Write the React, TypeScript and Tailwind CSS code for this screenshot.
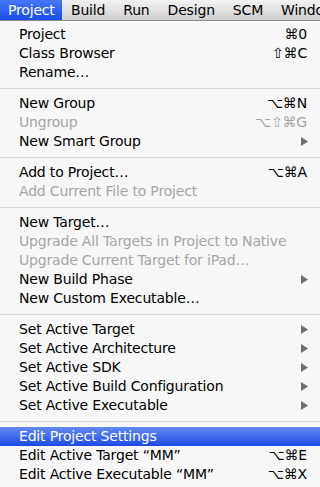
import React from 'react';

type Item =
  | { kind: 'sep' }
  | { kind: 'item'; label: string; shortcut?: string; disabled?: boolean; submenu?: boolean; active?: boolean };

const items: Item[] = [
  { kind: 'item', label: 'Project', shortcut: '⌘0' },
  { kind: 'item', label: 'Class Browser', shortcut: '⇧⌘C' },
  { kind: 'item', label: 'Rename…' },
  { kind: 'sep' },
  { kind: 'item', label: 'New Group', shortcut: '⌥⌘N' },
  { kind: 'item', label: 'Ungroup', shortcut: '⌥⇧⌘G', disabled: true },
  { kind: 'item', label: 'New Smart Group', submenu: true },
  { kind: 'sep' },
  { kind: 'item', label: 'Add to Project…', shortcut: '⌥⌘A' },
  { kind: 'item', label: 'Add Current File to Project', disabled: true },
  { kind: 'sep' },
  { kind: 'item', label: 'New Target…' },
  { kind: 'item', label: 'Upgrade All Targets in Project to Native', disabled: true },
  { kind: 'item', label: 'Upgrade Current Target for iPad…', disabled: true },
  { kind: 'item', label: 'New Build Phase', submenu: true },
  { kind: 'item', label: 'New Custom Executable…' },
  { kind: 'sep' },
  { kind: 'item', label: 'Set Active Target', submenu: true },
  { kind: 'item', label: 'Set Active Architecture', submenu: true },
  { kind: 'item', label: 'Set Active SDK', submenu: true },
  { kind: 'item', label: 'Set Active Build Configuration', submenu: true },
  { kind: 'item', label: 'Set Active Executable', submenu: true },
  { kind: 'sep' },
  { kind: 'item', label: 'Edit Project Settings', active: true },
  { kind: 'item', label: 'Edit Active Target “MM”', shortcut: '⌥⌘E' },
  { kind: 'item', label: 'Edit Active Executable “MM”', shortcut: '⌥⌘X' },
];

const menuBar = ['Project', 'Build', 'Run', 'Design', 'SCM', 'Window'];

function Arrow({ disabled }: { disabled?: boolean }) {
  return (
    <svg width="7" height="9" viewBox="0 0 7 9" className="mr-[2px]">
      <path d="M0 0 L7 4.5 L0 9 Z" fill={disabled ? '#b5b5b5' : '#6e6e6e'} />
    </svg>
  );
}

export default function App() {
  return (
    <div
      className="w-[320px] h-[487px] overflow-hidden bg-[#f7f7f7] text-[14px] tracking-[-0.18px]"
      style={{ fontFamily: '"DejaVu Sans", "Lucida Grande", sans-serif' }}
    >
      {/* menu bar */}
      <div className="flex h-[21px] items-stretch bg-gradient-to-b from-[#f2f2f2] to-[#cfcfcf] border-b border-[#8a8a8a] whitespace-nowrap">
        {menuBar.map((m, i) => (
          <div
            key={m}
            className={
              i === 0
                ? 'flex items-center pl-[8px] pr-[8px] w-[62px] shrink-0 text-white bg-gradient-to-b from-[#4577f6] to-[#1b4ce8]'
                : 'flex items-center px-[9px] shrink-0 text-black'
            }
          >
            {m}
          </div>
        ))}
      </div>

      {/* menu */}
      <div className="pt-[4px] whitespace-nowrap">
        {items.map((it, i) =>
          it.kind === 'sep' ? (
            <div key={i} className="h-[12px] flex items-center">
              <div className="h-px w-full bg-[#dadada]" />
            </div>
          ) : (
            <div
              key={i}
              className={
                'h-[19px] flex items-center justify-between pl-[19px] pr-[10px] ' +
                (it.active
                  ? 'bg-gradient-to-b from-[#6489f4] to-[#1c49e6] text-white'
                  : it.disabled
                  ? 'text-[#a6a6a6]'
                  : 'text-black')
              }
            >
              <span>{it.label}</span>
              {it.shortcut && <span className="pr-[3px]">{it.shortcut}</span>}
              {it.submenu && <Arrow disabled={it.disabled} />}
            </div>
          )
        )}
      </div>
    </div>
  );
}
